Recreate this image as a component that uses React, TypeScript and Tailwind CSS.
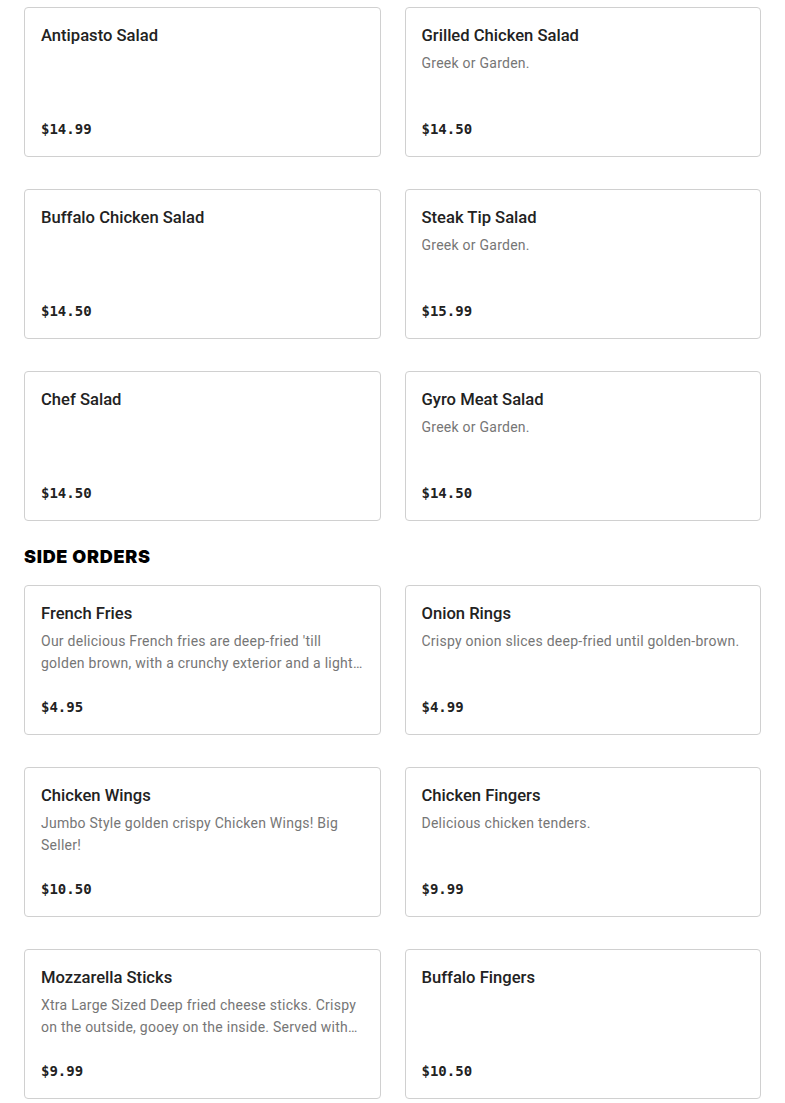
type Item = {
  name: string;
  description?: string;
  price: string;
};

const salads: Item[] = [
  { name: "Antipasto Salad", price: "$14.99" },
  { name: "Grilled Chicken Salad", description: "Greek or Garden.", price: "$14.50" },
  { name: "Buffalo Chicken Salad", price: "$14.50" },
  { name: "Steak Tip Salad", description: "Greek or Garden.", price: "$15.99" },
  { name: "Chef Salad", price: "$14.50" },
  { name: "Gyro Meat Salad", description: "Greek or Garden.", price: "$14.50" },
];

const sideOrders: Item[] = [
  {
    name: "French Fries",
    description:
      "Our delicious French fries are deep-fried 'till golden brown, with a crunchy exterior and a light fluffy interior.",
    price: "$4.95",
  },
  { name: "Onion Rings", description: "Crispy onion slices deep-fried until golden-brown.", price: "$4.99" },
  { name: "Chicken Wings", description: "Jumbo Style golden crispy Chicken Wings! Big Seller!", price: "$10.50" },
  { name: "Chicken Fingers", description: "Delicious chicken tenders.", price: "$9.99" },
  {
    name: "Mozzarella Sticks",
    description:
      "Xtra Large Sized Deep fried cheese sticks. Crispy on the outside, gooey on the inside. Served with marinara sauce.",
    price: "$9.99",
  },
  { name: "Buffalo Fingers", price: "$10.50" },
];

// Single menu card
function MenuCard({ item }: { item: Item }) {
  return (
    <div className="flex h-[150px] flex-col justify-between rounded-[4px] border border-[#d0d0d0] bg-white px-4 py-4">
      <div>
        <h3 className="font-['Roboto',sans-serif] text-[16.6px] leading-6 font-medium text-[#222]">{item.name}</h3>
        {item.description && (
          <p className="mt-1 line-clamp-2 font-['Roboto',sans-serif] text-[14px] leading-[22px] tracking-[0.25px] text-[#767676]">
            {item.description}
          </p>
        )}
      </div>
      <p className="font-['DejaVu_Sans_Mono',monospace] text-[14px] leading-[22px] font-bold text-[#222]">
        {item.price}
      </p>
    </div>
  );
}

function Section({ items }: { items: Item[] }) {
  return (
    <div className="grid grid-cols-2 gap-x-6 gap-y-8">
      {items.map((item) => (
        <MenuCard key={item.name} item={item} />
      ))}
    </div>
  );
}

export default function App() {
  return (
    <div className="min-h-screen bg-white px-6 pt-[7px] font-['Inter',sans-serif]">
      <Section items={salads} />
      <h2 className="mt-[22px] mb-[14px] text-[18px] leading-7 font-black tracking-[0.7px] text-black">
        SIDE ORDERS
      </h2>
      <Section items={sideOrders} />
    </div>
  );
}
